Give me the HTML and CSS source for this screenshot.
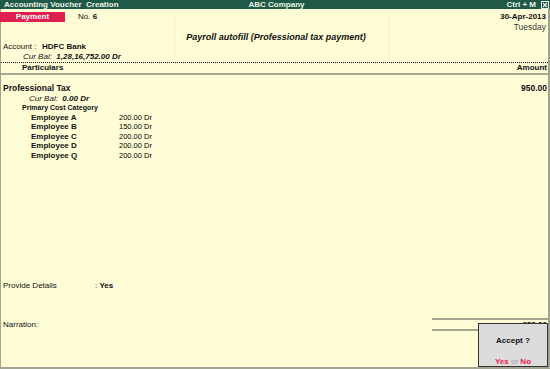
FILE: index.html
```html
<!DOCTYPE html>
<html>
<head>
  <meta charset="utf-8">
  <title>Accounting Voucher Creation</title>
  <link rel="stylesheet" href="styles.css">
</head>
<body>
  <div class="screen">
    <header class="titlebar">
      <span class="tb-left">Accounting Voucher  Creation</span>
      <span class="tb-center">ABC Company</span>
      <span class="tb-right">Ctrl + M
        <svg class="close" width="8" height="8" viewBox="0 0 8 8">
          <rect x="0.5" y="0.5" width="7" height="7" fill="none" stroke="#e8eee0" stroke-width="1"/>
          <path d="M2 2 L6 6 M6 2 L2 6" stroke="#e8eee0" stroke-width="1.2"/>
        </svg>
      </span>
    </header>

    <main class="voucher">
      <section class="vhead">
        <div class="vcol vcol-left">
          <div class="vtype"><span class="badge">Payment</span><span class="vno">No. <b>6</b></span></div>
          <div class="acct"><span class="acct-label">Account :</span><b>HDFC Bank</b></div>
          <div class="curbal">Cur Bal:&nbsp; <b>1,28,16,752.00 Dr</b></div>
        </div>
        <div class="vcol vcol-mid">
          <div class="purpose">Payroll autofill (Professional tax payment)</div>
        </div>
        <div class="vcol vcol-right">
          <div class="date">30-Apr-2013</div>
          <div class="day">Tuesday</div>
        </div>
      </section>

      <div class="colhead"><span class="ch-part">Particulars</span><span>Amount</span></div>

      <section class="entries">
        <div class="ledger"><span>Professional Tax</span><span>950.00</span></div>
        <div class="curbal ledger-bal">Cur Bal:&nbsp; <b>0.00 Dr</b></div>
        <div class="costcat">Primary Cost Category</div>
        <div class="alloc"><span class="emp">Employee A</span><span class="amt">200.00 Dr</span></div>
        <div class="alloc"><span class="emp">Employee B</span><span class="amt">150.00 Dr</span></div>
        <div class="alloc"><span class="emp">Employee C</span><span class="amt">200.00 Dr</span></div>
        <div class="alloc"><span class="emp">Employee D</span><span class="amt">200.00 Dr</span></div>
        <div class="alloc"><span class="emp">Employee Q</span><span class="amt">200.00 Dr</span></div>
      </section>

      <div class="details"><span class="det-label">Provide Details</span>: <b>Yes</b></div>

      <div class="narration">
        <span>Narration:</span>
        <div class="total">950.00</div>
      </div>

      <div class="accept">
        <div class="accept-q">Accept ?</div>
        <div class="accept-opts"><span class="opt">Yes</span> <span class="or">or</span> <span class="opt">No</span></div>
      </div>
    </main>
  </div>
</body>
</html>
```

FILE: styles.css
```css
* {
  box-sizing: border-box;
}
body {
  margin: 0;
  font-family: "Liberation Sans", Arial, sans-serif;
  font-size: 8px;
  color: #111;
}

.screen {
  width: 550px;
  height: 369px;
  display: flex;
  flex-direction: column;
  background: #fffdd6;
}

/* top bar */
.titlebar {
  height: 9px;
  background: #1f5a49;
  color: #eef2e4;
  font-weight: bold;
  line-height: 9px;
  display: grid;
  grid-template-columns: 1fr auto 1fr;
  padding: 0 1px 0 4px;
}
.tb-left {
  white-space: pre;
}
.tb-right {
  justify-self: end;
  display: flex;
  align-items: center;
  gap: 5px;
}
.close {
  display: block;
}

/* voucher body */
.voucher {
  flex: 1;
  position: relative;
  border-left: 1px solid #a3a392;
  border-right: 2px solid #a3a392;
  border-bottom: 2px solid #a3a392;
}

.vhead {
  display: grid;
  grid-template-columns: 174px 215px 1fr;
  padding-top: 3px;
  border-bottom: 1px dotted #1a1a1a;
}
.vcol {
  line-height: 10px;
}
.vcol-left,
.vcol-mid {
  border-right: 1px solid #f5f2cd;
}
.vtype {
  display: flex;
  height: 10px;
}
.badge {
  width: 65px;
  margin-left: -1px;
  background: #de1f4f;
  color: #fff;
  font-weight: bold;
  text-align: center;
}
.vno {
  margin-left: 13px;
}
.acct {
  margin-top: 20px;
  padding-left: 2px;
}
.acct-label {
  display: inline-block;
  width: 39px;
}
.curbal {
  font-style: italic;
  padding-left: 22px;
}
.purpose {
  margin-top: 20px;
  font-size: 9px;
  font-weight: bold;
  font-style: italic;
  text-align: center;
  white-space: nowrap;
  margin-left: -12px;
}
.vcol-right {
  text-align: right;
  padding-right: 2px;
}
.date {
  font-weight: bold;
}
.day {
  font-size: 8.5px;
  color: #3a3a3a;
}

.colhead {
  height: 12px;
  line-height: 10px;
  display: flex;
  justify-content: space-between;
  font-weight: bold;
  padding-right: 1px;
  border-bottom: 2px solid #a8a898;
}
.ch-part {
  padding-left: 21px;
}

/* ledger entries */
.entries {
  padding-top: 9px;
  line-height: 9.5px;
}
.ledger {
  display: flex;
  justify-content: space-between;
  font-size: 8.5px;
  font-weight: bold;
  padding: 0 1px 0 2px;
}
.ledger-bal {
  padding-left: 28px;
}
.costcat {
  font-size: 7px;
  font-weight: bold;
  padding-left: 21px;
}
.alloc {
  display: flex;
  padding-left: 30px;
}
.emp {
  width: 88px;
  font-weight: bold;
}
.amt {
  font-size: 7.5px;
  color: #000;
}

.details {
  margin-top: 121px;
  line-height: 10px;
  padding-left: 2px;
}
.det-label {
  display: inline-block;
  width: 92px;
}

.narration {
  margin-top: 27px;
  display: flex;
  justify-content: space-between;
  align-items: center;
  padding-left: 2px;
}
.total {
  width: 116px;
  height: 13px;
  line-height: 9px;
  border-top: 2px solid #a3a392;
  border-bottom: 2px solid #a3a392;
  text-align: right;
  font-weight: bold;
  padding-right: 1px;
}

/* confirmation box */
.accept {
  position: absolute;
  right: 0;
  bottom: 0;
  width: 70px;
  height: 44px;
  background: #dcdcdc;
  border: 1px solid #333;
  padding-top: 12px;
  text-align: center;
  font-weight: bold;
}
.accept-q {
  line-height: 10px;
}
.accept-opts {
  margin-top: 11px;
  line-height: 9px;
}
.opt {
  color: #e8194b;
}
.or {
  color: #a0a0a0;
  font-weight: normal;
}
```
